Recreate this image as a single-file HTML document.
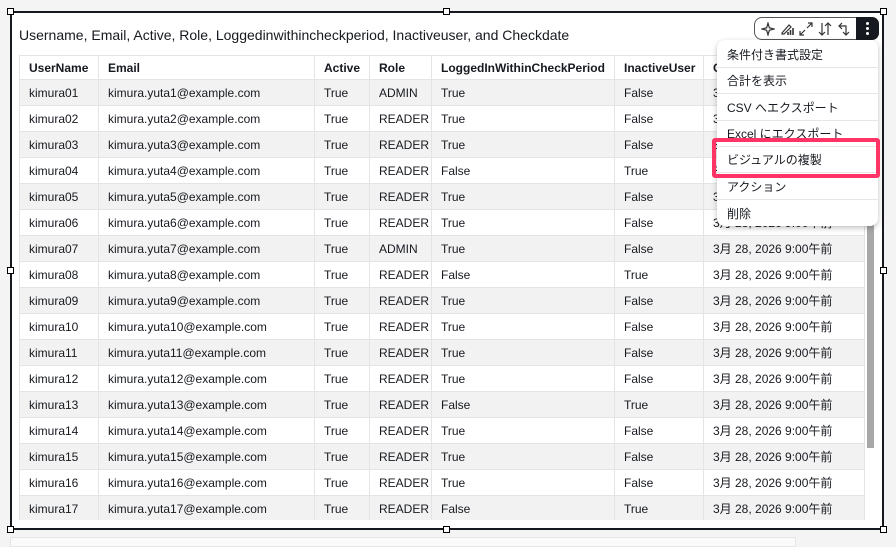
<!DOCTYPE html>
<html><head><meta charset="utf-8"><style>
*{box-sizing:border-box;margin:0;padding:0}
body{width:896px;height:541px;background:#f4f4f4;font-family:"Liberation Sans","Noto Sans CJK JP",sans-serif;position:relative;overflow:hidden;color:#16191f}
.card{position:absolute;left:10px;top:11px;width:874px;height:519px;background:#fff;border:2px solid #16191f}
.h{position:absolute;width:7px;height:7px;background:#fff;border:1px solid #000}
.title{position:absolute;left:19px;top:27px;font-size:14px;color:#16191f}
table{position:absolute;left:19px;top:55px;border-collapse:collapse;font-size:12px;table-layout:fixed;width:845px}
td,th{height:26px;padding:0 9px;border:1px solid #e4e4e4;text-align:left;white-space:nowrap;overflow:hidden}
th{font-weight:bold;height:24px}
tr.g td{background:#f2f2f2}
.wrap{position:absolute;left:0;top:0;width:896px;height:520px;overflow:hidden}
.sb{position:absolute;left:867px;top:55px;width:7px;height:393px;background:#a8a8a8}
.bot{position:absolute;left:10px;top:537px;width:786px;height:10px;background:#fafafa;border:1px solid #e6e6e6}
.tb{position:absolute;left:754px;top:17px;width:125px;height:23px;border:1px solid #555;border-radius:8px;background:#fff}
.tb svg{position:absolute;top:4px}
.dots{position:absolute;right:-1px;top:-1px;width:23px;height:23px;background:#16191f;border-radius:0 7px 7px 0}
.dots i{position:absolute;left:10px;width:3px;height:3px;background:#fff;border-radius:2px}
.menu{position:absolute;left:717px;top:40px;width:161px;height:186px;background:#fff;border-radius:8px;box-shadow:0 2px 6px rgba(0,0,0,.25);font-size:12px}
.mi{position:absolute;left:10px;font-size:12px}
.sep{position:absolute;left:0;right:0;height:1px;background:#e6e6e6}
.hl{position:absolute;left:712px;top:138px;width:168px;height:40px;border:4px solid #ff3366;border-radius:3px}
</style></head><body>
<div class="bot"></div>
<div class="card"></div>
<div class="title">Username, Email, Active, Role, Loggedinwithincheckperiod, Inactiveuser, and Checkdate</div>
<div class="wrap">
<table>
<colgroup><col style="width:79px"><col style="width:216px"><col style="width:55px"><col style="width:62px"><col style="width:183px"><col style="width:89px"><col style="width:161px"></colgroup>
<tr><th>UserName</th><th>Email</th><th>Active</th><th>Role</th><th>LoggedInWithinCheckPeriod</th><th>InactiveUser</th><th>Checkdate</th></tr>
<tr class="g"><td>kimura01</td><td>kimura.yuta1@example.com</td><td>True</td><td>ADMIN</td><td>True</td><td>False</td><td>3月 28, 2026 9:00午前</td></tr>
<tr><td>kimura02</td><td>kimura.yuta2@example.com</td><td>True</td><td>READER</td><td>True</td><td>False</td><td>3月 28, 2026 9:00午前</td></tr>
<tr class="g"><td>kimura03</td><td>kimura.yuta3@example.com</td><td>True</td><td>READER</td><td>True</td><td>False</td><td>3月 28, 2026 9:00午前</td></tr>
<tr><td>kimura04</td><td>kimura.yuta4@example.com</td><td>True</td><td>READER</td><td>False</td><td>True</td><td>3月 28, 2026 9:00午前</td></tr>
<tr class="g"><td>kimura05</td><td>kimura.yuta5@example.com</td><td>True</td><td>READER</td><td>True</td><td>False</td><td>3月 28, 2026 9:00午前</td></tr>
<tr><td>kimura06</td><td>kimura.yuta6@example.com</td><td>True</td><td>READER</td><td>True</td><td>False</td><td>3月 28, 2026 9:00午前</td></tr>
<tr class="g"><td>kimura07</td><td>kimura.yuta7@example.com</td><td>True</td><td>ADMIN</td><td>True</td><td>False</td><td>3月 28, 2026 9:00午前</td></tr>
<tr><td>kimura08</td><td>kimura.yuta8@example.com</td><td>True</td><td>READER</td><td>False</td><td>True</td><td>3月 28, 2026 9:00午前</td></tr>
<tr class="g"><td>kimura09</td><td>kimura.yuta9@example.com</td><td>True</td><td>READER</td><td>True</td><td>False</td><td>3月 28, 2026 9:00午前</td></tr>
<tr><td>kimura10</td><td>kimura.yuta10@example.com</td><td>True</td><td>READER</td><td>True</td><td>False</td><td>3月 28, 2026 9:00午前</td></tr>
<tr class="g"><td>kimura11</td><td>kimura.yuta11@example.com</td><td>True</td><td>READER</td><td>True</td><td>False</td><td>3月 28, 2026 9:00午前</td></tr>
<tr><td>kimura12</td><td>kimura.yuta12@example.com</td><td>True</td><td>READER</td><td>True</td><td>False</td><td>3月 28, 2026 9:00午前</td></tr>
<tr class="g"><td>kimura13</td><td>kimura.yuta13@example.com</td><td>True</td><td>READER</td><td>False</td><td>True</td><td>3月 28, 2026 9:00午前</td></tr>
<tr><td>kimura14</td><td>kimura.yuta14@example.com</td><td>True</td><td>READER</td><td>True</td><td>False</td><td>3月 28, 2026 9:00午前</td></tr>
<tr class="g"><td>kimura15</td><td>kimura.yuta15@example.com</td><td>True</td><td>READER</td><td>True</td><td>False</td><td>3月 28, 2026 9:00午前</td></tr>
<tr><td>kimura16</td><td>kimura.yuta16@example.com</td><td>True</td><td>READER</td><td>True</td><td>False</td><td>3月 28, 2026 9:00午前</td></tr>
<tr class="g"><td>kimura17</td><td>kimura.yuta17@example.com</td><td>True</td><td>READER</td><td>False</td><td>True</td><td>3月 28, 2026 9:00午前</td></tr>
</table>
<div class="sb"></div>
</div>
<div class="h" style="left:7px;top:8px"></div><div class="h" style="left:443px;top:8px"></div><div class="h" style="left:880px;top:8px"></div>
<div class="h" style="left:7px;top:267px"></div><div class="h" style="left:880px;top:267px"></div>
<div class="h" style="left:7px;top:526px"></div><div class="h" style="left:443px;top:526px"></div><div class="h" style="left:880px;top:526px"></div>
<div class="tb">
<svg style="left:6px" width="14" height="14" viewBox="0 0 14 14" fill="none" stroke="#333" stroke-width="1.2"><path d="M7 1L8.3 5.7 13 7 8.3 8.3 7 13 5.7 8.3 1 7 5.7 5.7Z"/></svg>
<svg style="left:25px" width="14" height="14" viewBox="0 0 14 14" fill="none" stroke="#333" stroke-width="1.2"><path d="M2 11L9 3l2 2-7 7H2z"/><path d="M8 13V10M10.5 13V8M13 13V6" stroke-width="1.6"/></svg>
<svg style="left:44px" width="14" height="14" viewBox="0 0 14 14" fill="none" stroke="#333" stroke-width="1.2"><path d="M8 6l5-5M9 1h4v4M6 8l-5 5M1 9v4h4"/></svg>
<svg style="left:63px" width="14" height="14" viewBox="0 0 14 14" fill="none" stroke="#333" stroke-width="1.2"><path d="M4 1v12M1 10l3 3 3-3M10 13V1M7 4l3-3 3 3"/></svg>
<svg style="left:82px" width="14" height="14" viewBox="0 0 14 14" fill="none" stroke="#333" stroke-width="1.2"><path d="M5 1L2 4l3 3M2 4h7v9M6 10l3 3 3-3"/></svg>
<div class="dots"><i style="top:5px"></i><i style="top:10px"></i><i style="top:15px"></i></div>
</div>
<div class="menu">
<div class="mi" style="top:6px">条件付き書式設定</div><div class="sep" style="top:27px"></div>
<div class="mi" style="top:32px">合計を表示</div><div class="sep" style="top:53px"></div>
<div class="mi" style="top:59px">CSV へエクスポート</div><div class="sep" style="top:80px"></div>
<div class="mi" style="top:85px">Excel にエクスポート</div><div class="sep" style="top:106px"></div>
<div class="mi" style="top:111px">ビジュアルの複製</div><div class="sep" style="top:132px"></div>
<div class="mi" style="top:138px">アクション</div><div class="sep" style="top:159px"></div>
<div class="mi" style="top:165px">削除</div>
</div>
<div class="hl"></div>
</body></html>
